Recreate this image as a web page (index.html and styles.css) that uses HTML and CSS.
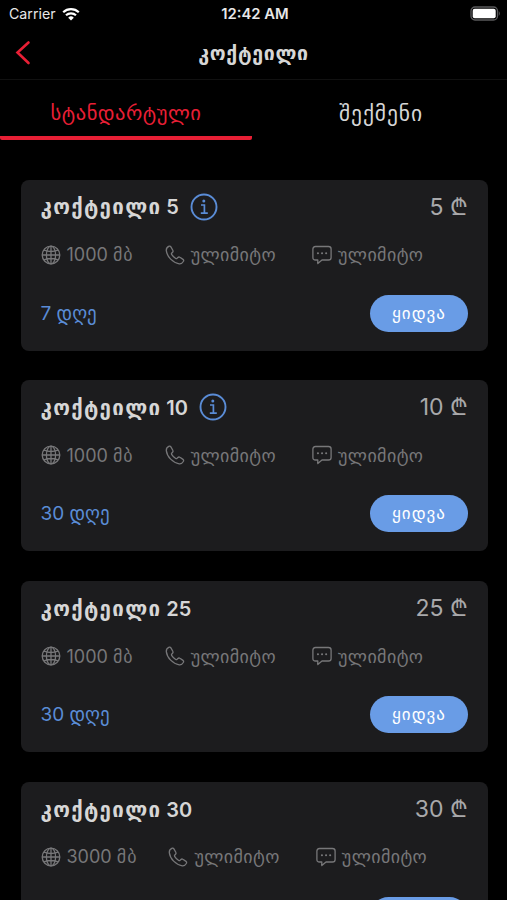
FILE: index.html
```html
<!DOCTYPE html>
<html lang="ka">
<head>
    <meta charset="UTF-8">
    <meta name="viewport" content="width=device-width, initial-scale=1.0">
    <title>კოქტეილი</title>
    <link rel="stylesheet" href="styles.css">
</head>
<body>
    <svg class="sprite" width="0" height="0">
        <symbol id="info" viewBox="0 0 28 28">
            <circle cx="14" cy="14" r="12.5" stroke-width="1.9"/>
            <path d="M11 12h3.4v8M10.8 20.2h7" stroke-width="1.7"/>
            <circle cx="13.8" cy="7.9" r="1.5" fill="currentColor" stroke="none"/>
        </symbol>
        <symbol id="globe" viewBox="0 0 20 20">
            <circle cx="10" cy="10" r="8.8"/>
            <ellipse cx="10" cy="10" rx="4.6" ry="8.8"/>
            <path d="M10 1.2v17.6M1.2 10h17.6M3 5.2q7 2.6 14 0M3 14.8q7-2.6 14 0"/>
        </symbol>
        <symbol id="phone" viewBox="0 0 20 20">
            <path d="M4.2 1.2C2.4 2 1.1 3.5 1.3 5.6c.7 6.2 6.6 12.2 13 13.2 2 .2 3.3-.9 4.2-2.5.4-.8.2-1.4-.5-1.9l-3.1-2.1c-.7-.5-1.4-.4-2 .2l-.9.9c-.4.4-.8.4-1.3.1C9.1 12.4 7.6 10.9 6.6 9.3c-.3-.5-.2-.9.2-1.3l.8-.8c.6-.6.6-1.2.2-1.9L5.9 1.9c-.4-.7-1-.9-1.7-.7z"/>
        </symbol>
        <symbol id="chat" viewBox="0 0 20 20">
            <path d="M3.5 1.5h13q2.600 0 2.600 2.600v8.300q0 2.600-2.600 2.600H10l-4.200 3.600V15H3.500Q.9 15 .9 12.400V4.100q0-2.600 2.600-2.600z"/>
            <path class="dots" d="M5.9 8.300h.1M10 8.300h.1M14.100 8.300h.1"/>
        </symbol>
    </svg>

    <div class="status-bar">
        <div class="carrier">
            <span>Carrier</span>
            <svg class="wifi" viewBox="0 0 18 14">
                <path d="M1.2 5.200a11.200 11.200 0 0 1 15.600 0M4 8.300a7.200 7.200 0 0 1 10 0" fill="none" stroke="currentColor" stroke-width="2.2"/>
                <path d="M9 13.500 6.200 10.700a4 4 0 0 1 5.600 0z" fill="currentColor"/>
            </svg>
        </div>
        <div class="clock">12:42 AM</div>
        <div class="power">
            <svg class="battery" viewBox="0 0 31 15">
                <rect x="1" y="1" width="26.5" height="13" rx="4" fill="none" stroke="#59595b" stroke-width="1.3"/>
                <rect x="2.7" y="2.7" width="23" height="9.6" rx="2" fill="#fff"/>
                <path d="M28.8 5q2 2.500 0 5z" fill="#59595b"/>
            </svg>
        </div>
    </div>

    <div class="nav-bar">
        <svg class="back" viewBox="0 0 16 26"><path d="M13.500 2.500 2.500 12.500l11 10.500"/></svg>
        <h1>კოქტეილი</h1>
    </div>

    <div class="tabs">
        <div class="tab active"><span>სტანდარტული</span></div>
        <div class="tab"><span>შექმენი</span></div>
    </div>

    <div class="cards">
        <div class="card">
            <div class="card-head">
                <h2><span class="caps">კოქტეილი</span> 5</h2>
                <svg class="info"><use href="#info"/></svg>
                <div class="price">5 <span class="lari">₾</span></div>
            </div>
            <div class="specs">
                <div class="spec"><svg><use href="#globe"/></svg>1000 <span class="unit">მბ</span></div>
                <div class="spec"><svg><use href="#phone"/></svg><span class="geo">ულიმიტო</span></div>
                <div class="spec"><svg><use href="#chat"/></svg><span class="geo">ულიმიტო</span></div>
            </div>
            <div class="card-foot">
                <div class="period">7 დღე</div>
                <button type="button">ყიდვა</button>
            </div>
        </div>

        <div class="card">
            <div class="card-head">
                <h2><span class="caps">კოქტეილი</span> 10</h2>
                <svg class="info"><use href="#info"/></svg>
                <div class="price">10 <span class="lari">₾</span></div>
            </div>
            <div class="specs">
                <div class="spec"><svg><use href="#globe"/></svg>1000 <span class="unit">მბ</span></div>
                <div class="spec"><svg><use href="#phone"/></svg><span class="geo">ულიმიტო</span></div>
                <div class="spec"><svg><use href="#chat"/></svg><span class="geo">ულიმიტო</span></div>
            </div>
            <div class="card-foot">
                <div class="period">30 დღე</div>
                <button type="button">ყიდვა</button>
            </div>
        </div>

        <div class="card">
            <div class="card-head">
                <h2><span class="caps">კოქტეილი</span> 25</h2>
                <div class="price">25 <span class="lari">₾</span></div>
            </div>
            <div class="specs">
                <div class="spec"><svg><use href="#globe"/></svg>1000 <span class="unit">მბ</span></div>
                <div class="spec"><svg><use href="#phone"/></svg><span class="geo">ულიმიტო</span></div>
                <div class="spec"><svg><use href="#chat"/></svg><span class="geo">ულიმიტო</span></div>
            </div>
            <div class="card-foot">
                <div class="period">30 დღე</div>
                <button type="button">ყიდვა</button>
            </div>
        </div>

        <div class="card">
            <div class="card-head">
                <h2><span class="caps">კოქტეილი</span> 30</h2>
                <div class="price">30 <span class="lari">₾</span></div>
            </div>
            <div class="specs">
                <div class="spec"><svg><use href="#globe"/></svg>3000 <span class="unit">მბ</span></div>
                <div class="spec"><svg><use href="#phone"/></svg><span class="geo">ულიმიტო</span></div>
                <div class="spec"><svg><use href="#chat"/></svg><span class="geo">ულიმიტო</span></div>
            </div>
            <div class="card-foot">
                <div class="period">30 დღე</div>
                <button type="button">ყიდვა</button>
            </div>
        </div>
    </div>
</body>
</html>
```
FILE: styles.css
```css
* {
    box-sizing: border-box;
}
html, body {
    height: 100%;
    margin: 0;
    overflow: hidden;
    background: #000;
}
body {
    color: #d6d6d6;
    font-family: Inter, "DejaVu Sans", sans-serif;
    white-space: nowrap;
}
.sprite {
    display: block;
}
.status-bar {
    display: grid;
    grid-template-columns: 1fr auto 1fr;
    align-items: center;
    height: 27px;
    padding: 0 6px 0 9px;
    font-size: 14.2px;
    color: #e8e8e8;
}
.carrier {
    display: flex;
    align-items: center;
    gap: 6px;
}
.wifi {
    width: 18px;
    height: 14px;
    color: #fff;
}
.clock {
    font-size: 14.8px;
    font-weight: 600;
}
.power {
    display: flex;
    justify-content: flex-end;
}
.battery {
    width: 31px;
    height: 15px;
}
.nav-bar {
    display: grid;
    grid-template-columns: 40px 1fr 40px;
    align-items: center;
    height: 53px;
    padding: 0 15px;
    border-bottom: 1px solid #111;
}
.back {
    width: 16px;
    height: 26px;
    fill: none;
    stroke: #e81f35;
    stroke-width: 2.6;
    stroke-linecap: round;
}
h1 {
    margin: 0;
    text-align: center;
    font-size: 19.5px;
    font-weight: 700;
    letter-spacing: 0.7px;
}
.tabs {
    display: grid;
    grid-template-columns: 252px 1fr;
    height: 60px;
}
.tab {
    display: flex;
    align-items: center;
    justify-content: center;
    padding-top: 9px;
    font-size: 20.5px;
    letter-spacing: 0.5px;
    border-bottom: 4px solid transparent;
    border-radius: 2px;
}
.tab:last-child {
    font-size: 21.5px;
    letter-spacing: 0.9px;
    padding-left: 3px;
}
.tab.active {
    color: #e81f35;
    border-bottom-color: #e81f35;
}
.cards {
    display: flex;
    flex-direction: column;
    gap: 29.8px;
    padding: 39.5px 19.5px 0 20.5px;
}
.card {
    display: flex;
    flex-direction: column;
    flex-shrink: 0;
    height: 171px;
    padding: 0 19.5px 0 20px;
    border-radius: 8px;
    background: #1c1c1e;
}
.card-head {
    display: flex;
    align-items: center;
    height: 54px;
}
h2 {
    margin: 2px 0 0;
    font-size: 20px;
    font-weight: 600;
    line-height: 1;
}
.caps {
    text-transform: uppercase;
    font-size: 20.5px;
    letter-spacing: 1.3px;
}
.info {
    width: 28px;
    height: 28px;
    margin-left: 11px;
    fill: none;
    stroke: currentColor;
    color: #5a8cd6;
}
.price {
    margin: 0 0 2px auto;
    font-size: 23px;
    color: #a9a9ab;
}
.lari {
    font-family: "DejaVu Sans", sans-serif;
}
.specs {
    display: flex;
    align-items: center;
    height: 42px;
    gap: 31px;
    font-size: 18px;
    color: #777779;
}
.spec {
    display: flex;
    align-items: center;
    white-space: pre;
}
.spec:last-child {
    margin-left: 5px;
}
.unit {
    letter-spacing: 1px;
}
.geo {
    letter-spacing: 0.4px;
}
.spec svg {
    width: 20px;
    height: 20px;
    margin-right: 6px;
    fill: none;
    stroke: currentColor;
    stroke-width: 1.3;
    stroke-linejoin: round;
}
.dots {
    stroke-width: 2;
    stroke-linecap: round;
}
.card-foot {
    display: flex;
    align-items: center;
    justify-content: space-between;
    height: 75px;
}
.period {
    font-size: 19px;
    line-height: 1;
    color: #5a8cd6;
}
button {
    width: 98px;
    height: 37px;
    padding: 0;
    border: none;
    border-radius: 19px;
    background: #699ce6;
    color: #fff;
    font-family: inherit;
    font-size: 17px;
    line-height: 1;
    letter-spacing: 1px;
    text-transform: uppercase;
}
```
